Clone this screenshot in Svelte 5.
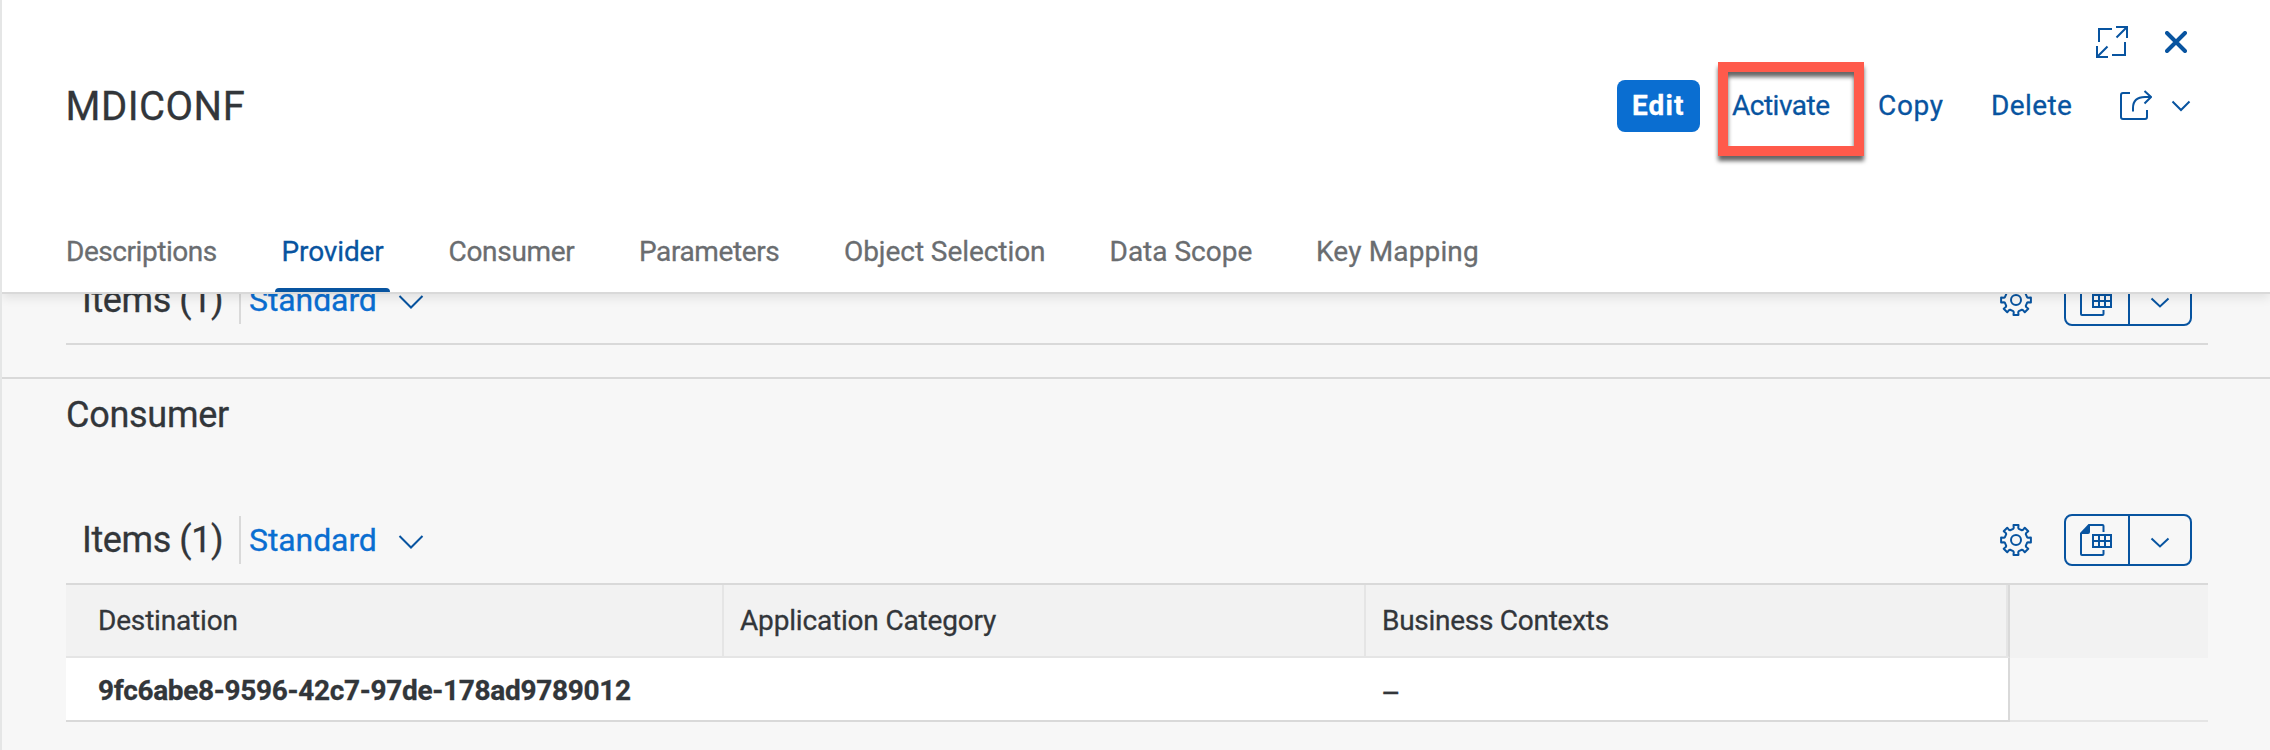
<script>
  const tabs = [
    { label: 'Descriptions', width: 215.5, spacing: -0.45 },
    { label: 'Provider', width: 167, spacing: -0.12, active: true },
    { label: 'Consumer', width: 190.5, spacing: -0.3 },
    { label: 'Parameters', width: 205, spacing: -0.4 },
    { label: 'Object Selection', width: 265.5, spacing: -0.06 },
    { label: 'Data Scope', width: 206.5, spacing: 0 },
    { label: 'Key Mapping', width: 180, spacing: 0.15 }
  ];

  // Outline of the settings wheel: eight rounded teeth around a centre of (16, 16).
  function gearOutline() {
    const pts = [];
    for (let i = 0; i < 8; i++) {
      const mid = i * 45;
      for (const [offset, r] of [[-14, 11.4], [-10.5, 12.4], [-9.5, 15.1], [9.5, 15.1], [10.5, 12.4], [14, 11.4]]) {
        const a = ((mid + offset) * Math.PI) / 180;
        pts.push(`${(16 + r * Math.sin(a)).toFixed(2)} ${(16 - r * Math.cos(a)).toFixed(2)}`);
      }
    }
    return `M${pts.join('L')}Z`;
  }
  const gear = gearOutline();
</script>

{#snippet toolbar()}
  <div class="toolbar">
    <span class="count">Items (1)</span>
    <span class="divider"></span>
    <span class="variant">Standard</span>
    <svg class="variant-arrow" width="26" height="16" viewBox="0 0 26 16"><path d="M1.5 2 13 13.5 24.500 2" /></svg>
    <svg class="gear" width="32" height="32" viewBox="0 0 32 32">
      <path d={gear} />
      <circle cx="16" cy="16" r="5" />
    </svg>
    <div class="export">
      <div class="export-main">
        <svg width="32" height="32" viewBox="0 0 32 32">
          <path d="M9 1H22.500Q23.500 1 23.500 2V8M23.500 26V30Q23.500 31 22.500 31H2Q1 31 1 30V9" />
          <path class="solid" d="M0 9 8.500 0H10V8Q10 10 8 10H0Z" />
          <path d="M13 11H31V23H13ZM13 17H31M19 11V23M25 11V23" />
        </svg>
      </div>
      <div class="export-more">
        <svg width="20" height="12" viewBox="0 0 20 12"><path d="M1.500 1.500 10 9.500 18.500 1.500" /></svg>
      </div>
    </div>
  </div>
{/snippet}

<div class="page">
  <header>
    <div class="window-actions">
      <svg width="32" height="32" viewBox="0 0 32 32">
        <path d="M3 16V3H16M29 16V29H16M20 1H31V12M31 1 20.500 11.500M1 20V31H12M1 31 11.500 20.500" />
      </svg>
      <svg class="close" width="22" height="22" viewBox="0 0 22 22"><path d="M2 2 20 20M20 2 2 20" /></svg>
    </div>
    <div class="title-row">
      <h1>MDICONF</h1>
      <div class="actions">
        <button class="edit">Edit</button>
        <button class="activate">Activate</button>
        <button class="copy">Copy</button>
        <button class="delete">Delete</button>
        <svg class="share" width="32" height="30" viewBox="0 0 32 30">
          <path d="M10 3H3Q1 3 1 5V27Q1 29 3 29H25Q27 29 27 27V20" />
          <path d="M13 21.500V18Q13 7 25 7H31M24.500 1 31 7 24.500 13.500" />
        </svg>
        <svg class="share-arrow" width="20" height="12" viewBox="0 0 20 12"><path d="M1.500 1.500 10 10 18.500 1.500" /></svg>
      </div>
    </div>
    <nav>
      {#each tabs as tab}
        <div class="tab" class:active={tab.active} style:width="{tab.width}px" style:letter-spacing="{tab.spacing}px">{tab.label}</div>
      {/each}
    </nav>
  </header>

  <main>
    <section class="provider">
      {@render toolbar()}
      <div class="rule"></div>
    </section>
    <section class="consumer">
      <h2>Consumer</h2>
      {@render toolbar()}
      <div class="rule"></div>
      <div class="row head">
        <div class="cell destination">Destination</div>
        <div class="cell category">Application Category</div>
        <div class="cell contexts">Business Contexts</div>
        <div class="filler"></div>
      </div>
      <div class="row item">
        <div class="cell destination">9fc6abe8-9596-42c7-97de-178ad9789012</div>
        <div class="cell category"></div>
        <div class="cell contexts">–</div>
        <div class="filler"></div>
      </div>
    </section>
  </main>

  <div class="highlight"></div>
</div>

<style>
  :global(body) {
    margin: 0;
  }
  * {
    box-sizing: border-box;
  }
  .page {
    position: relative;
    width: 2270px;
    height: 750px;
    overflow: hidden;
    border-left: 2px solid #e5e6e6;
    background: #f7f7f7;
    color: #32363a;
    font-family: Roboto, 'Liberation Sans', sans-serif;
    font-size: 28px;
    -webkit-text-stroke: 0.3px;
  }
  svg {
    display: block;
    flex: none;
    fill: none;
    stroke: #0854a0;
    stroke-width: 2;
  }
  header {
    position: relative;
    z-index: 1;
    height: 294px;
    background: #fff;
    border-bottom: 2px solid #d9d9d9;
    box-shadow: 0 4px 10px rgba(0, 0, 0, 0.09);
  }
  .window-actions {
    display: flex;
    justify-content: flex-end;
    align-items: center;
    gap: 37px;
    height: 60px;
    padding: 24px 83px 0 0;
  }
  .close {
    stroke-width: 4;
    stroke-linecap: round;
  }
  .title-row {
    display: flex;
    justify-content: space-between;
    align-items: center;
    height: 92px;
    padding: 0 79px 0 63.5px;
  }
  h1,
  h2 {
    margin: 0;
    font-weight: 400;
  }
  h1 {
    font-size: 40px;
    letter-spacing: 0.5px;
  }
  .actions {
    display: flex;
    align-items: center;
  }
  button {
    height: 52px;
    padding: 0;
    border: 0;
    border-radius: 8px;
    background: none;
    color: #0854a0;
    font: 400 28px/52px Roboto, 'Liberation Sans', sans-serif;
    text-align: left;
    white-space: nowrap;
  }
  .edit {
    width: 83px;
    margin-right: 32px;
    padding-left: 15px;
    background: #0a6ed1;
    color: #fff;
    font-size: 28px;
    font-weight: 700;
    letter-spacing: 1.1px;
  }
  .activate {
    width: 146px;
    letter-spacing: -0.5px;
  }
  .copy {
    width: 113px;
    letter-spacing: 0.7px;
  }
  .delete {
    width: 129px;
    letter-spacing: 0.4px;
  }
  .share {
    margin-top: -2px;
  }
  .share-arrow {
    margin-left: 19px;
  }
  nav {
    display: flex;
    height: 82px;
    margin-top: 58px;
    padding-left: 64px;
    color: #6a6d70;
    line-height: 84px;
  }
  .tab {
    position: relative;
    flex: none;
    white-space: nowrap;
  }
  .active {
    color: #0854a0;
  }
  .active::after {
    content: '';
    position: absolute;
    bottom: 0;
    left: -6.500px;
    width: 115px;
    height: 4px;
    border-radius: 4px 4px 0 0;
    background: #0854a0;
  }
  main {
    margin-top: -37px;
  }
  section {
    padding: 0 62px 0 64px;
  }
  .provider {
    height: 122px;
    border-bottom: 2px solid #d9d9d9;
  }
  h2 {
    height: 72px;
    margin-bottom: 46px;
    font-size: 36px;
    line-height: 72px;
    letter-spacing: -0.27px;
  }
  .toolbar {
    display: flex;
    align-items: center;
    height: 86px;
    padding: 0 16px;
  }
  .count {
    width: 157px;
    font-size: 36px;
    letter-spacing: -0.4px;
  }
  .divider {
    width: 2px;
    height: 48px;
    margin-right: 8px;
    background: #d9d9d9;
  }
  .variant {
    width: 149px;
    color: #0a6ed1;
    font-size: 32px;
    letter-spacing: -0.1px;
  }
  .variant-arrow {
    margin-top: 3px;
  }
  .gear {
    margin-left: auto;
    stroke-linejoin: round;
  }
  .export {
    display: flex;
    width: 128px;
    height: 52px;
    margin-left: 32px;
    border: 2px solid #0854a0;
    border-radius: 8px;
  }
  .export-main {
    display: flex;
    align-items: center;
    width: 64px;
    padding-left: 14px;
    border-right: 2px solid #0854a0;
  }
  .solid {
    fill: #0854a0;
    stroke: none;
  }
  .export-more {
    display: flex;
    flex: 1;
    align-items: center;
    justify-content: center;
    padding-top: 5px;
  }
  .rule {
    height: 2px;
    background: #d9d9d9;
  }
  .row {
    display: flex;
  }
  .cell {
    flex: none;
    white-space: nowrap;
  }
  .destination {
    width: 658px;
    padding-left: 32px;
  }
  .category {
    width: 642px;
    padding-left: 16px;
  }
  .contexts {
    width: 644px;
    padding-left: 16px;
  }
  .filler {
    flex: 1;
  }
  .head {
    height: 73px;
    line-height: 71px;
    background: #f2f2f2;
  }
  .head .cell {
    border-right: 2px solid #e5e5e5;
    border-bottom: 2px solid #e5e5e5;
  }
  .head .destination,
  .head .category {
    letter-spacing: -0.18px;
  }
  .head .contexts {
    border-right-color: #d9d9d9;
    box-shadow: inset -2px 0 #e5e5e5;
    letter-spacing: -0.27px;
  }
  .item {
    height: 64px;
    line-height: 66px;
  }
  .item .cell {
    background: #fff;
    border-bottom: 2px solid #d9d9d9;
  }
  .item .destination {
    font-weight: 700;
    letter-spacing: -0.31px;
  }
  .item .contexts {
    padding-left: 15px;
    border-right: 2px solid #d9d9d9;
    font-size: 30px;
    line-height: 69px;
  }
  .item .filler {
    border-bottom: 2px solid #e5e5e5;
  }
  .highlight {
    position: absolute;
    z-index: 2;
    top: 62px;
    left: 1716px;
    width: 146px;
    height: 94px;
    border: 10px solid #ff5a4b;
    filter: drop-shadow(0 5px 2px rgba(0, 0, 0, 0.6));
  }
</style>
